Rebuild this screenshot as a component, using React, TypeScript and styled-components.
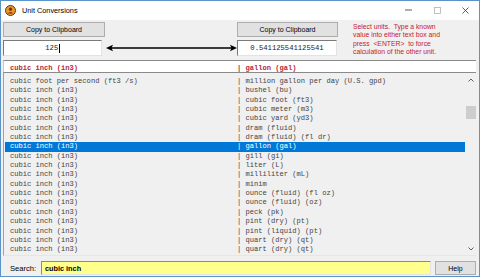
import React from "react";
import styled, { createGlobalStyle } from "styled-components";

const Global = createGlobalStyle`
  html, body { margin: 0; padding: 0; background: #ffffff; overflow: hidden; }
  * { box-sizing: border-box; }
`;

const Window = styled.div`
  width: 480px;
  height: 277px;
  border: 1px solid #5b93c9;
  display: flex;
  flex-direction: column;
  background: #f0f0f0;
  font-family: "Liberation Sans", Arial, sans-serif;
`;

const TitleBar = styled.div`
  height: 19px;
  flex: 0 0 19px;
  background: #ffffff;
  display: flex;
  align-items: center;
  padding-left: 4px;
  padding-bottom: 1px;
`;

const Title = styled.span`
  margin-left: 6px;
  font-size: 7.3px;
  color: #000;
  flex: 1;
`;

const CaptionGroup = styled.div`
  display: flex;
  align-items: center;
  height: 100%;
`;

const CaptionButton = styled.div`
  width: 28px;
  height: 100%;
  display: flex;
  align-items: center;
  justify-content: center;
`;

const Body = styled.div`
  flex: 1;
  display: flex;
  flex-direction: column;
  padding: 2px 3px 1px 2px;
`;

const Top = styled.div`
  display: grid;
  grid-template-columns: 102px 132px 101px 1fr;
  grid-template-rows: 15px 16px;
  row-gap: 3px;
`;

const Button = styled.button<{ $w?: number }>`
  width: ${(p) => (p.$w ? `${p.$w}px` : "100%")};
  height: 100%;
  margin: 0;
  padding: 0;
  background: #e1e1e1;
  border: 1px solid #adadad;
  font-family: "Liberation Sans", Arial, sans-serif;
  font-size: 7px;
  color: #000;
  display: flex;
  align-items: center;
  justify-content: center;
`;

const Info = styled.div`
  grid-column: 4;
  grid-row: 1 / span 2;
  padding-left: 15px;
  padding-top: 1px;
  font-size: 6.8px;
  line-height: 8.4px;
  color: #c4202e;
`;

const ValueBox = styled.div<{ $w: number }>`
  width: ${(p) => p.$w}px;
  height: 100%;
  background: #fff;
  border: 1px solid #7a7a7a;
  border-right-color: #e3e3e3;
  border-bottom-color: #e3e3e3;
  display: flex;
  align-items: center;
  justify-content: center;
  font-family: "Liberation Mono", "Courier New", monospace;
  font-size: 7.2px;
  color: #222;
`;

const Caret = styled.span`
  display: inline-block;
  width: 1px;
  height: 9px;
  background: #000;
  margin-left: 0.5px;
`;

const ArrowCell = styled.div`
  display: flex;
  align-items: center;
  justify-content: center;
`;

const HeaderBox = styled.div`
  margin-top: 4px;
  height: 12px;
  background: #fff;
  border-top: 1px solid #8a8a8a;
  border-left: 1px solid #c8c8c8;
  display: grid;
  grid-template-columns: 227px 1fr;
  align-items: center;
  padding-left: 6px;
  padding-top: 2px;
  font-family: "Liberation Mono", "Courier New", monospace;
  font-size: 7.1px;
  font-weight: bold;
  color: #b8283a;
  white-space: pre;
`;

const ListBox = styled.div`
  flex: 1;
  border-top: 1px solid #8a8a8a;
  border-left: 1px solid #a0a0a0;
  border-bottom: 1px solid #e6e6e6;
  display: flex;
  overflow: hidden;
`;

const Rows = styled.div`
  flex: 1;
  padding-top: 4px;
  padding-left: 1px;
`;

const Row = styled.div<{ $sel?: boolean }>`
  height: 9.35px;
  line-height: 9.35px;
  display: grid;
  grid-template-columns: 227px 1fr;
  padding-left: 5px;
  font-family: "Liberation Mono", "Courier New", monospace;
  font-size: 7.1px;
  white-space: pre;
  color: ${(p) => (p.$sel ? "#ffffff" : "#444444")};
  background: ${(p) => (p.$sel ? "#0078d7" : "transparent")};
`;

const ScrollBar = styled.div`
  width: 11px;
  display: flex;
  flex-direction: column;
  align-items: center;
`;

const ScrollArrow = styled.div`
  height: 13px;
  width: 100%;
  display: flex;
  align-items: center;
  justify-content: center;
`;

const Track = styled.div`
  flex: 1;
  width: 100%;
  padding-top: 20px;
`;

const Thumb = styled.div`
  width: 10px;
  margin: 0 auto;
  height: 13px;
  background: #cdcdcd;
`;

const SearchRow = styled.div`
  margin-top: 5px;
  height: 14px;
  display: flex;
  align-items: stretch;
`;

const SearchLabel = styled.div`
  width: 38px;
  padding-left: 7px;
  display: flex;
  align-items: center;
  font-size: 7.6px;
  color: #000;
`;

const SearchInput = styled.div`
  flex: 1;
  background: #ffff8c;
  border: 1px solid #8a8a8a;
  border-right-color: #e3e3e3;
  border-bottom-color: #e3e3e3;
  display: flex;
  align-items: center;
  padding-left: 3px;
  font-size: 7.3px;
  font-weight: bold;
  color: #000;
`;

const HelpButton = styled(Button)`
  margin-left: 4px;
`;

const rows: [string, string][] = [
  ["cubic foot per second (ft3 /s)", "million gallon per day (U.S. gpd)"],
  ["cubic inch (in3)", "bushel (bu)"],
  ["cubic inch (in3)", "cubic foot (ft3)"],
  ["cubic inch (in3)", "cubic meter (m3)"],
  ["cubic inch (in3)", "cubic yard (yd3)"],
  ["cubic inch (in3)", "dram (fluid)"],
  ["cubic inch (in3)", "dram (fluid) (fl dr)"],
  ["cubic inch (in3)", "gallon (gal)"],
  ["cubic inch (in3)", "gill (gi)"],
  ["cubic inch (in3)", "liter (L)"],
  ["cubic inch (in3)", "milliliter (mL)"],
  ["cubic inch (in3)", "minim"],
  ["cubic inch (in3)", "ounce (fluid) (fl oz)"],
  ["cubic inch (in3)", "ounce (fluid) (oz)"],
  ["cubic inch (in3)", "peck (pk)"],
  ["cubic inch (in3)", "pint (dry) (pt)"],
  ["cubic inch (in3)", "pint (liquid) (pt)"],
  ["cubic inch (in3)", "quart (dry) (qt)"],
  ["cubic inch (in3)", "quart (dry) (qt)"],
];

const AppIcon = () => (
  <svg width="11" height="11" viewBox="0 0 11 11">
    <circle cx="5.5" cy="5.5" r="5" fill="#e59a2e" stroke="#6b3510" strokeWidth="1" />
    <circle cx="5.5" cy="4.2" r="1.6" fill="#7a2a10" />
    <path d="M2.8 8.6 Q5.5 5.2 8.2 8.6 Z" fill="#7a2a10" />
  </svg>
);

const DoubleArrow = () => (
  <svg width="131" height="8" viewBox="0 0 131 8">
    <line x1="4" y1="4" x2="127" y2="4" stroke="#000" strokeWidth="1.6" />
    <path d="M0 4 L7 0.8 L5.5 4 L7 7.2 Z" fill="#000" />
    <path d="M131 4 L124 0.8 L125.5 4 L124 7.2 Z" fill="#000" />
  </svg>
);

const Chevron = ({ up }: { up?: boolean }) => (
  <svg width="6" height="4" viewBox="0 0 6 4">
    <path d={up ? "M0.5 3.5 L3 1 L5.5 3.5" : "M0.5 0.5 L3 3 L5.5 0.5"} fill="none" stroke="#606060" strokeWidth="1" />
  </svg>
);

export default function App() {
  return (
    <>
      <Global />
      <Window>
        <TitleBar>
          <AppIcon />
          <Title>Unit Conversions</Title>
          <CaptionGroup>
            <CaptionButton>
              <svg width="8" height="2" viewBox="0 0 8 2"><line x1="0" y1="1" x2="7" y2="1" stroke="#333" strokeWidth="0.8" /></svg>
            </CaptionButton>
            <CaptionButton>
              <svg width="7" height="7" viewBox="0 0 7 7"><rect x="0.5" y="0.5" width="6" height="6" fill="none" stroke="#b0b0b0" strokeWidth="0.8" /></svg>
            </CaptionButton>
            <CaptionButton>
              <svg width="7" height="7" viewBox="0 0 7 7"><path d="M0.5 0.5 L6.5 6.5 M6.5 0.5 L0.5 6.5" stroke="#333" strokeWidth="0.8" /></svg>
            </CaptionButton>
          </CaptionGroup>
        </TitleBar>
        <Body>
          <Top>
            <Button>Copy to Clipboard</Button>
            <div />
            <Button>Copy to Clipboard</Button>
            <Info>
              Select units.&nbsp; Type a known<br />
              value into either text box and<br />
              press &nbsp;&lt;ENTER&gt;&nbsp; to force<br />
              calculation of the other unit.
            </Info>
            <ValueBox $w={99}>125<Caret /></ValueBox>
            <ArrowCell><DoubleArrow /></ArrowCell>
            <ValueBox $w={100}>0.541125541125541</ValueBox>
          </Top>
          <HeaderBox>
            <span>cubic inch (in3)</span>
            <span>| gallon (gal)</span>
          </HeaderBox>
          <ListBox>
            <Rows>
              {rows.map(([a, b], i) => (
                <Row key={i} $sel={i === 7}>
                  <span>{a}</span>
                  <span>| {b}</span>
                </Row>
              ))}
            </Rows>
            <ScrollBar>
              <ScrollArrow><Chevron up /></ScrollArrow>
              <Track><Thumb /></Track>
              <ScrollArrow><Chevron /></ScrollArrow>
            </ScrollBar>
          </ListBox>
          <SearchRow>
            <SearchLabel>Search:</SearchLabel>
            <SearchInput>cubic inch</SearchInput>
            <HelpButton $w={41}>Help</HelpButton>
          </SearchRow>
        </Body>
      </Window>
    </>
  );
}
